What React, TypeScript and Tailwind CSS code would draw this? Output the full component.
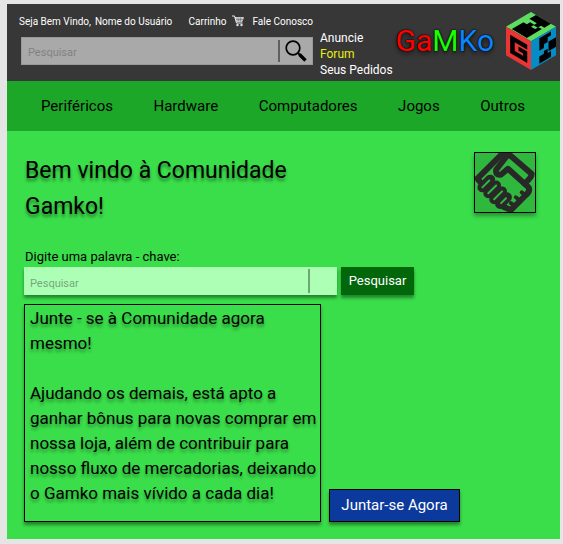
import React from "react";

const navItems = ["Periféricos", "Hardware", "Computadores", "Jogos", "Outros"];

function CartIcon() {
  return (
    <svg viewBox="0 0 24 24" className="h-3 w-3" fill="none" stroke="#e8e8e8" aria-hidden="true">
      <path d="M0 2h5l4 14h12" strokeWidth="2" />
      <path d="M6 5h17l-3 8H9z" fill="#bdbdbd" strokeWidth="1.5" />
      <path d="M8 9h14M12 5l1 8M17 5v8" stroke="#666" strokeWidth="1" />
      <circle cx="11" cy="20" r="2" fill="#e8e8e8" />
      <circle cx="19" cy="20" r="2" fill="#e8e8e8" />
    </svg>
  );
}

function MagnifierIcon() {
  return (
    <svg viewBox="0 0 22 22" className="h-[22px] w-[22px]" fill="none" stroke="#000" aria-hidden="true">
      <circle cx="8" cy="8" r="6.8" strokeWidth="1.7" />
      <path d="M13 13l2 2" strokeWidth="2" />
      <path d="M14.5 14.5l6 6" strokeWidth="3.4" />
    </svg>
  );
}

// Each face is drawn on a flat 6x6 grid and skewed onto its side of the cube.
function CubeLogo() {
  return (
    <svg viewBox="0 0 150 174" className="h-[58px] w-[50px] shrink-0" role="img" aria-label="Gamko">
      <g transform="matrix(12.5 -7.33 12.5 7.33 0 44)">
        <path d="M0 0h6v6H0z" fill="#5fdc62" />
        <path d="M0.2 1.2H3V2h.8V3H3v1h.8v.8H.2z" fill="#000" />
        <path d="M4.4 1.2H6v3.6H4.4V4h-.8V3h.8z" fill="#000" />
      </g>
      <g transform="matrix(12.5 7.33 0 14.33 0 44)">
        <path d="M0 0h6v6H0z" fill="#ea3535" />
        <path d="M1 1.2h4.1v1H2.1v1.8h2v-.5H3v-.9h2.1v2.4H1z" fill="#000" />
      </g>
      <g transform="matrix(12.5 -7.33 0 14.33 75 88)">
        <path d="M0 0h6v6H0z" fill="#058cc4" />
        <path d="M2 .4h2.8v.8H4v1h-.9V3H2zM4.2 2.2H6v2H4.2zM2 4.2h1.1V3.6H4v.9h.8v1.2H2z" fill="#000" />
      </g>
    </svg>
  );
}

function HandshakeIcon() {
  return (
    <svg viewBox="0 0 60 60" className="h-full w-full" fill="none" stroke="#282828" strokeWidth="6" strokeLinecap="round" strokeLinejoin="round" aria-hidden="true">
      <path d="M2 26L26 2L36 3L57 21Q58 24 50 31M2 26L6 31" />
      <path d="M31 4L21 17Q20 23 26 22L33 16L54 35Q56 39 51 43L36 58L29 55" />
      <path d="M51 43l-4-3M45 48l-4-3M40 54l-4-3" strokeWidth="4" />
      <path d="M7 35l8-8M13 41l8-8M19 47l8-8M25 52l7-7" strokeWidth="10" />
      <path d="M7 35l7-7M13 41l8-8M19 47l8-8M26 51l5-5" stroke="#30b73d" strokeWidth="2" />
    </svg>
  );
}

export default function App() {
  return (
    <div className="min-h-screen bg-[#e5e5e5] pt-1 pr-[3px] pb-[5px] pl-[7px] font-[Roboto,'Liberation_Sans',sans-serif] text-black">
      <header className="flex h-[77px] items-start bg-[#373737] pr-1 text-white">
        <div className="w-[306px] shrink-0 pt-2 pl-3">
          <div className="flex h-[18px] items-center whitespace-nowrap text-[10px]">
            <span>Seja Bem Vindo,</span>
            <span className="ml-1">Nome do Usuário</span>
            <a href="#carrinho" className="ml-auto flex items-center gap-1.5">
              Carrinho
              <CartIcon />
            </a>
            <a href="#contato" className="ml-2">Fale Conosco</a>
          </div>
          <form className="mt-[7px] ml-0.5 flex h-7 items-center border border-[#999] bg-[#a9a9a9]">
            <input aria-label="Pesquisar na loja" placeholder="Pesquisar" className="h-full min-w-0 flex-1 bg-transparent px-1.5 pt-0.5 text-[11px] outline-none placeholder:text-[#828282]" />
            <span className="h-[22px] w-0.5 bg-[#606060]" />
            <button type="button" aria-label="Buscar" className="flex w-8 justify-center">
              <MagnifierIcon />
            </button>
          </form>
        </div>
        <div className="ml-[7px] flex flex-col pt-[26px] text-xs leading-4 whitespace-nowrap">
          <a href="#anuncie">Anuncie</a>
          <a href="#forum" className="text-[#e8ee10]">Forum</a>
          <a href="#pedidos">Seus Pedidos</a>
        </div>
        <div className="ml-auto flex items-center gap-3 pt-2">
          <p className="text-[30px] leading-none [text-shadow:0_0_1px_#000,0_0_2px_#000,0_3px_4px_#0008]">
            <span className="text-[#f00]">Ga</span>
            <span className="text-[#1aff00]">M</span>
            <span className="text-[#0a84ff]">Ko</span>
          </p>
          <CubeLogo />
        </div>
      </header>
      <nav className="flex h-[50px] items-center justify-between bg-[#1ca728] pr-[35px] pl-[34px] text-[15px]">
        {navItems.map((item) => (
          <a key={item} href={"#" + item.toLowerCase()}>{item}</a>
        ))}
      </nav>
      <main className="bg-[#3add4a] px-[17px] pt-[21px] pb-[17px]">
        <div className="flex items-start justify-between pr-[7px]">
          <h1 className="w-[300px] pt-px pl-px text-[23px] leading-9 [text-shadow:0_3px_3px_#0006]">Bem vindo à Comunidade Gamko!</h1>
          <div className="h-[61px] w-[62px] border border-black bg-[#30b73d] shadow-[0_3px_4px_#0005]">
            <HandshakeIcon />
          </div>
        </div>
        <label htmlFor="palavra" className="mt-[22px] block pl-px text-[13px] leading-5">Digite uma palavra - chave:</label>
        <form className="flex gap-1">
          <div className="flex h-7 w-[313px] items-center bg-[#adffb6] shadow-[0_3px_3px_#0006]">
            <input id="palavra" placeholder="Pesquisar" className="h-full min-w-0 flex-1 bg-transparent px-1.5 pt-1 text-[11px] outline-none placeholder:text-[#76a87b]" />
            <span className="mr-[27px] h-6 w-0.5 bg-[#6da874]" />
          </div>
          <button type="button" className="h-7 w-[73px] bg-[#02660b] text-[13px] text-white shadow-[0_3px_3px_#0006]">Pesquisar</button>
        </form>
        <div className="mt-[9px] flex items-end gap-2">
          <section className="h-[218px] w-[297px] border border-black pt-px pl-[5px] text-[17px] leading-[25px] shadow-[0_3px_3px_#0006] [text-shadow:0_3px_3px_#0005]">
            <p>Junte - se à Comunidade agora mesmo!</p>
            <p className="mt-[25px]">Ajudando os demais, está apto a ganhar bônus para novas comprar em nossa loja, além de contribuir para nosso fluxo de mercadorias, deixando o Gamko mais vívido a cada dia!</p>
          </section>
          <button type="button" className="h-[33px] w-[131px] border border-black bg-[#0c3a9c] text-[15px] text-white shadow-[0_3px_3px_#0006]">Juntar-se Agora</button>
        </div>
      </main>
    </div>
  );
}
